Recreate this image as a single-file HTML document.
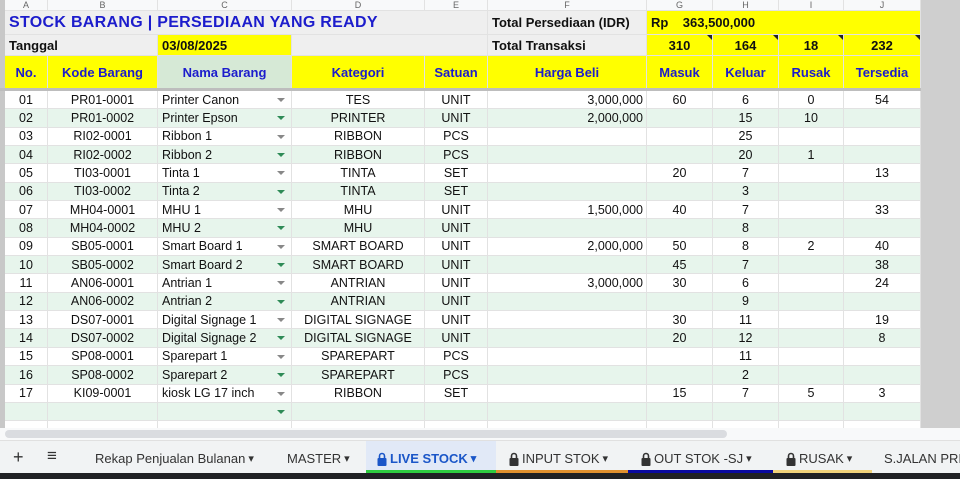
<!DOCTYPE html>
<html><head><meta charset="utf-8"><style>
*{margin:0;padding:0;box-sizing:border-box}
body{width:960px;height:479px;overflow:hidden;background:#fff;font-family:"Liberation Sans",Arial,sans-serif;position:relative}
.r{position:absolute;left:0;width:960px;display:grid;grid-template-columns:5px 43px 110px 134px 133px 63px 159px 66px 66px 65px 77px 39px}
.r>div{border-right:1px solid #e2e2e2;border-bottom:1px solid #e2e2e2;display:flex;align-items:center;justify-content:center;font-size:12.5px;color:#111;white-space:nowrap;overflow:hidden;position:relative}
.r>div:first-child{background:#c8c8c8;border:none}
.r>div:last-child{background:#cfcfcf;border:none}
.ch>div{background:#f8f9fa;color:#666;font-size:9px;align-items:flex-end}
.y{background:#ffff00!important}
.g{background:#efefef}
.hd>div{font-weight:bold;color:#1c1ccc;font-size:13px}
.l{justify-content:flex-start!important;padding-left:4px}
.rt{justify-content:flex-end!important;padding-right:3px}
.d>div{height:18.35px}
.gr>div{background:#e7f5ec}
.ar::after{content:"";position:absolute;right:6px;top:7px;border:4px solid transparent;border-top:4px solid #888;border-bottom:0}
.gr .ar::after{border-top-color:#2e8b57}
.tri::after{content:"";position:absolute;right:0;top:0;border-left:5px solid transparent;border-top:5px solid #222}
.tab{position:absolute;top:10px;white-space:nowrap;display:flex;align-items:center;gap:3px}
.lk{width:10px;height:14px}
</style></head><body>
<div class="r ch" style="top:0;height:11px"><div></div><div>A</div><div>B</div><div>C</div><div>D</div><div>E</div><div>F</div><div>G</div><div>H</div><div>I</div><div>J</div><div></div></div>
<div class="r" style="top:11px;height:24px"><div></div><div class="g l" style="grid-column:2/7;font-weight:bold;color:#1c1ccc;font-size:16px;letter-spacing:.3px">STOCK BARANG | PERSEDIAAN YANG READY</div><div class="g l" style="font-weight:bold;font-size:13px">Total Persediaan (IDR)</div><div class="y l" style="grid-column:8/12;font-weight:bold;font-size:13px">Rp &nbsp;&nbsp; 363,500,000</div><div></div></div>
<div class="r" style="top:35px;height:21px"><div></div><div class="g l" style="grid-column:2/4;font-weight:bold;font-size:13px">Tanggal</div><div class="y l" style="font-weight:bold;font-size:13px">03/08/2025</div><div class="g" style="grid-column:5/7"></div><div class="g l" style="font-weight:bold;font-size:13px">Total Transaksi</div><div class="y tri" style="font-weight:bold;font-size:13px">310</div><div class="y tri" style="font-weight:bold;font-size:13px">164</div><div class="y tri" style="font-weight:bold;font-size:13px">18</div><div class="y tri" style="font-weight:bold;font-size:13px">232</div><div></div></div>
<div class="r hd" style="top:56px;height:33px"><div></div><div class="y">No.</div><div class="y">Kode Barang</div><div style="background:#d6e9d6">Nama Barang</div><div class="y">Kategori</div><div class="y">Satuan</div><div class="y">Harga Beli</div><div class="y">Masuk</div><div class="y">Keluar</div><div class="y">Rusak</div><div class="y">Tersedia</div><div></div></div>
<div style="position:absolute;top:88px;left:0;width:921px;height:3px;background:#bdbdbd"></div>
<div style="position:absolute;top:91px;left:0;width:960px">
<div class="r d" style="position:relative"><div></div><div>01</div><div>PR01-0001</div><div class="l ar">Printer Canon</div><div>TES</div><div>UNIT</div><div class="rt">3,000,000</div><div>60</div><div>6</div><div>0</div><div>54</div><div></div></div>
<div class="r d gr" style="position:relative"><div></div><div>02</div><div>PR01-0002</div><div class="l ar">Printer Epson</div><div>PRINTER</div><div>UNIT</div><div class="rt">2,000,000</div><div></div><div>15</div><div>10</div><div></div><div></div></div>
<div class="r d" style="position:relative"><div></div><div>03</div><div>RI02-0001</div><div class="l ar">Ribbon 1</div><div>RIBBON</div><div>PCS</div><div></div><div></div><div>25</div><div></div><div></div><div></div></div>
<div class="r d gr" style="position:relative"><div></div><div>04</div><div>RI02-0002</div><div class="l ar">Ribbon 2</div><div>RIBBON</div><div>PCS</div><div></div><div></div><div>20</div><div>1</div><div></div><div></div></div>
<div class="r d" style="position:relative"><div></div><div>05</div><div>TI03-0001</div><div class="l ar">Tinta 1</div><div>TINTA</div><div>SET</div><div></div><div>20</div><div>7</div><div></div><div>13</div><div></div></div>
<div class="r d gr" style="position:relative"><div></div><div>06</div><div>TI03-0002</div><div class="l ar">Tinta 2</div><div>TINTA</div><div>SET</div><div></div><div></div><div>3</div><div></div><div></div><div></div></div>
<div class="r d" style="position:relative"><div></div><div>07</div><div>MH04-0001</div><div class="l ar">MHU 1</div><div>MHU</div><div>UNIT</div><div class="rt">1,500,000</div><div>40</div><div>7</div><div></div><div>33</div><div></div></div>
<div class="r d gr" style="position:relative"><div></div><div>08</div><div>MH04-0002</div><div class="l ar">MHU 2</div><div>MHU</div><div>UNIT</div><div></div><div></div><div>8</div><div></div><div></div><div></div></div>
<div class="r d" style="position:relative"><div></div><div>09</div><div>SB05-0001</div><div class="l ar">Smart Board 1</div><div>SMART BOARD</div><div>UNIT</div><div class="rt">2,000,000</div><div>50</div><div>8</div><div>2</div><div>40</div><div></div></div>
<div class="r d gr" style="position:relative"><div></div><div>10</div><div>SB05-0002</div><div class="l ar">Smart Board 2</div><div>SMART BOARD</div><div>UNIT</div><div></div><div>45</div><div>7</div><div></div><div>38</div><div></div></div>
<div class="r d" style="position:relative"><div></div><div>11</div><div>AN06-0001</div><div class="l ar">Antrian 1</div><div>ANTRIAN</div><div>UNIT</div><div class="rt">3,000,000</div><div>30</div><div>6</div><div></div><div>24</div><div></div></div>
<div class="r d gr" style="position:relative"><div></div><div>12</div><div>AN06-0002</div><div class="l ar">Antrian 2</div><div>ANTRIAN</div><div>UNIT</div><div></div><div></div><div>9</div><div></div><div></div><div></div></div>
<div class="r d" style="position:relative"><div></div><div>13</div><div>DS07-0001</div><div class="l ar">Digital Signage 1</div><div>DIGITAL SIGNAGE</div><div>UNIT</div><div></div><div>30</div><div>11</div><div></div><div>19</div><div></div></div>
<div class="r d gr" style="position:relative"><div></div><div>14</div><div>DS07-0002</div><div class="l ar">Digital Signage 2</div><div>DIGITAL SIGNAGE</div><div>UNIT</div><div></div><div>20</div><div>12</div><div></div><div>8</div><div></div></div>
<div class="r d" style="position:relative"><div></div><div>15</div><div>SP08-0001</div><div class="l ar">Sparepart 1</div><div>SPAREPART</div><div>PCS</div><div></div><div></div><div>11</div><div></div><div></div><div></div></div>
<div class="r d gr" style="position:relative"><div></div><div>16</div><div>SP08-0002</div><div class="l ar">Sparepart 2</div><div>SPAREPART</div><div>PCS</div><div></div><div></div><div>2</div><div></div><div></div><div></div></div>
<div class="r d" style="position:relative"><div></div><div>17</div><div>KI09-0001</div><div class="l ar">kiosk LG 17 inch</div><div>RIBBON</div><div>SET</div><div></div><div>15</div><div>7</div><div>5</div><div>3</div><div></div></div>
<div class="r d gr" style="position:relative"><div></div><div></div><div></div><div class="ar"></div><div></div><div></div><div></div><div></div><div></div><div></div><div></div><div></div></div>
<div class="r" style="position:relative;height:8px"><div></div><div></div><div></div><div></div><div></div><div></div><div></div><div></div><div></div><div></div><div></div><div></div></div>
</div>
<div style="position:absolute;z-index:5;top:11px;left:921px;width:39px;height:417px;background:#cfcfcf"></div>
<div style="position:absolute;top:428px;left:0;width:960px;height:12px;background:#f8f9fa"></div>
<div style="position:absolute;top:430px;left:5px;width:722px;height:8px;background:#dadce0;border-radius:4px"></div>
<div style="position:absolute;top:440px;left:0;width:960px;height:33px;background:#f1f3f4;border-top:1px solid #e0e0e0;font-size:13px;color:#333;overflow:hidden">
<span style="position:absolute;left:13px;top:6px;font-size:18px">+</span>
<span style="position:absolute;left:47px;top:5px;font-size:17px">≡</span>
<span class="tab" style="left:95px">Rekap Penjualan Bulanan <small>▾</small></span>
<span class="tab" style="left:287px">MASTER <small>▾</small></span>
<div style="position:absolute;left:366px;top:0;width:130px;height:33px;background:#e1e9f7;border-bottom:4px solid #2ecc40"></div>
<span class="tab" style="left:377px;color:#1a56c8;font-weight:bold"><svg class="lk" viewBox="0 0 10 14"><path d="M2.5 6V4a2.5 2.5 0 0 1 5 0v2" fill="none" stroke="#1a56c8" stroke-width="1.6"/><rect x="0.5" y="6" width="9" height="8" rx="1" fill="#1a56c8"/></svg>LIVE STOCK <small>▾</small></span>
<div style="position:absolute;left:496px;top:29px;width:132px;height:4px;background:#e0902e"></div>
<span class="tab" style="left:509px"><svg class="lk" viewBox="0 0 10 14"><path d="M2.5 6V4a2.5 2.5 0 0 1 5 0v2" fill="none" stroke="#333" stroke-width="1.6"/><rect x="0.5" y="6" width="9" height="8" rx="1" fill="#333"/></svg>INPUT STOK <small>▾</small></span>
<div style="position:absolute;left:628px;top:29px;width:145px;height:4px;background:#0a0aa0"></div>
<span class="tab" style="left:641px"><svg class="lk" viewBox="0 0 10 14"><path d="M2.5 6V4a2.5 2.5 0 0 1 5 0v2" fill="none" stroke="#333" stroke-width="1.6"/><rect x="0.5" y="6" width="9" height="8" rx="1" fill="#333"/></svg>OUT STOK -SJ <small>▾</small></span>
<div style="position:absolute;left:773px;top:29px;width:99px;height:4px;background:#f1d27a"></div>
<span class="tab" style="left:786px"><svg class="lk" viewBox="0 0 10 14"><path d="M2.5 6V4a2.5 2.5 0 0 1 5 0v2" fill="none" stroke="#333" stroke-width="1.6"/><rect x="0.5" y="6" width="9" height="8" rx="1" fill="#333"/></svg>RUSAK <small>▾</small></span>
<span class="tab" style="left:884px">S.JALAN PRI</span>
</div>
<div style="position:absolute;top:473px;left:0;width:960px;height:6px;background:#202124"></div>
</body></html>
